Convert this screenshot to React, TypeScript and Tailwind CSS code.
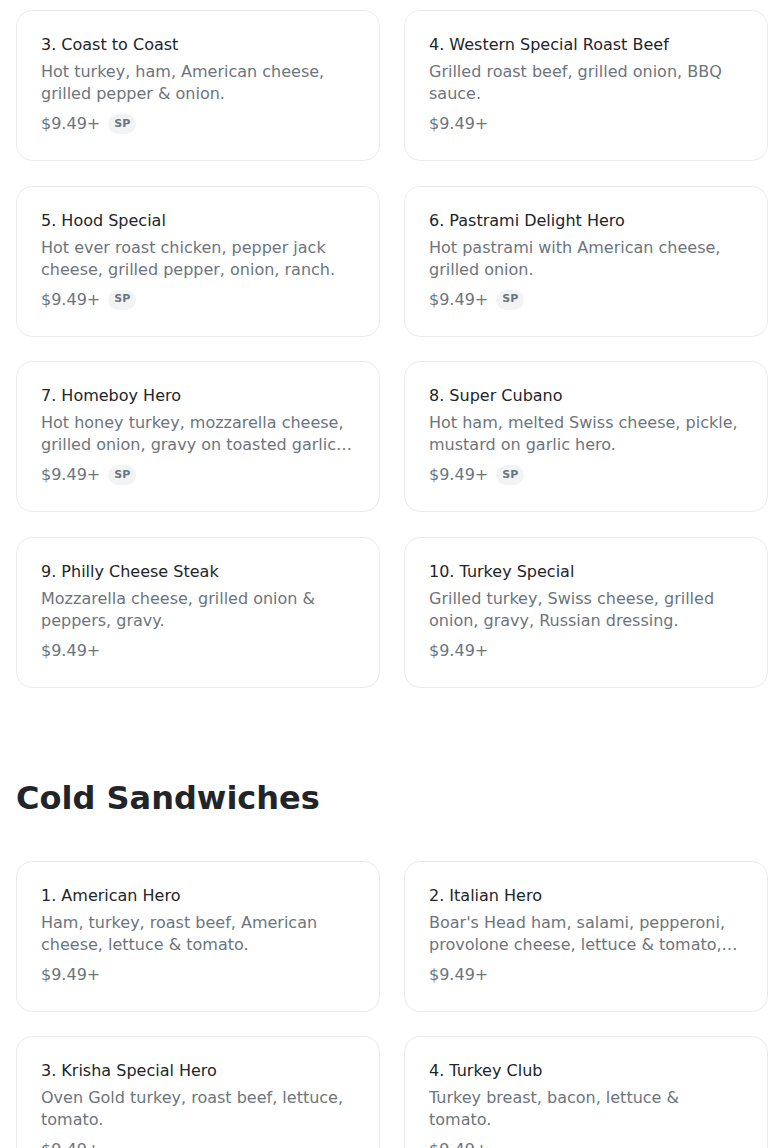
type Item = { name: string; desc: string; price: string; sp?: boolean };

const hot: Item[] = [
  { name: "3. Coast to Coast", desc: "Hot turkey, ham, American cheese, grilled pepper & onion.", price: "$9.49+", sp: true },
  { name: "4. Western Special Roast Beef", desc: "Grilled roast beef, grilled onion, BBQ sauce.", price: "$9.49+" },
  { name: "5. Hood Special", desc: "Hot ever roast chicken, pepper jack cheese, grilled pepper, onion, ranch.", price: "$9.49+", sp: true },
  { name: "6. Pastrami Delight Hero", desc: "Hot pastrami with American cheese, grilled onion.", price: "$9.49+", sp: true },
  { name: "7. Homeboy Hero", desc: "Hot honey turkey, mozzarella cheese, grilled onion, gravy on toasted garlic hero.", price: "$9.49+", sp: true },
  { name: "8. Super Cubano", desc: "Hot ham, melted Swiss cheese, pickle, mustard on garlic hero.", price: "$9.49+", sp: true },
  { name: "9. Philly Cheese Steak", desc: "Mozzarella cheese, grilled onion & peppers, gravy.", price: "$9.49+" },
  { name: "10. Turkey Special", desc: "Grilled turkey, Swiss cheese, grilled onion, gravy, Russian dressing.", price: "$9.49+" },
];

const cold: Item[] = [
  { name: "1. American Hero", desc: "Ham, turkey, roast beef, American cheese, lettuce & tomato.", price: "$9.49+" },
  { name: "2. Italian Hero", desc: "Boar's Head ham, salami, pepperoni, provolone cheese, lettuce & tomato, oil & vinegar.", price: "$9.49+" },
  { name: "3. Krisha Special Hero", desc: "Oven Gold turkey, roast beef, lettuce, tomato.", price: "$9.49+" },
  { name: "4. Turkey Club", desc: "Turkey breast, bacon, lettuce & tomato.", price: "$9.49+" },
];

function MenuCard({ item }: { item: Item }) {
  return (
    <div className="border border-[#e9ecef] rounded-2xl bg-white p-6">
      <div className="text-base leading-5 text-[#212529]">{item.name}</div>
      <p className="mt-[6px] text-base leading-[22px] text-[#6c757d] line-clamp-2">{item.desc}</p>
      <div className="mt-[7px] flex items-center gap-2 h-6">
        <span className="text-base leading-6 text-[#6c757d]">{item.price}</span>
        {item.sp && (
          <span className="h-5 px-1.5 flex items-center rounded-full bg-[#f1f3f5] text-[11px] font-bold text-[#6c757d]">
            SP
          </span>
        )}
      </div>
    </div>
  );
}

export default function App() {
  return (
    <div className="bg-white min-h-screen px-4 pt-[10px] pb-12 font-['DejaVu_Sans',sans-serif]">
      <div className="grid grid-cols-2 gap-x-6 gap-y-[24.5px]">
        {hot.map((it) => (
          <MenuCard key={it.name} item={it} />
        ))}
      </div>

      <h2 className="mt-[91px] mb-[44px] text-[32px] leading-[38px] font-bold text-[#212529]">Cold Sandwiches</h2>

      <div className="grid grid-cols-2 gap-x-6 gap-y-[24.5px]">
        {cold.map((it) => (
          <MenuCard key={it.name} item={it} />
        ))}
      </div>
    </div>
  );
}
